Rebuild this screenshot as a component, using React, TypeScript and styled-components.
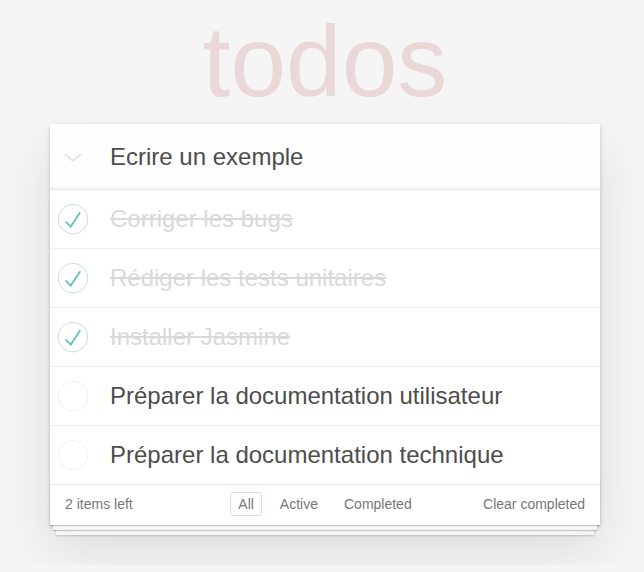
import styled, { createGlobalStyle } from "styled-components";

const GlobalStyle = createGlobalStyle`
  html, body {
    margin: 0;
    padding: 0;
    background: #f5f5f5;
  }
  body {
    font: 14px "Liberation Sans", "Helvetica Neue", Helvetica, Arial, sans-serif;
    line-height: 1.4em;
    color: #4d4d4d;
    -webkit-font-smoothing: antialiased;
  }
`;

const Page = styled.div`
  width: 550px;
  margin: 0 0 0 50px;
  padding-bottom: 40px;
`;

const Title = styled.h1`
  margin: 11px 0 13px;
  height: 100px;
  font-size: 100px;
  line-height: 100px;
  font-weight: 100;
  text-align: center;
  color: rgba(175, 47, 47, 0.15);
  text-rendering: optimizeLegibility;
`;

const Card = styled.section`
  position: relative;
  background: #fff;
  box-shadow: 0 2px 4px rgba(0, 0, 0, 0.2), 0 25px 50px rgba(0, 0, 0, 0.1);
`;

const NewTodoRow = styled.header`
  display: flex;
  align-items: center;
  height: 65px;
  background: rgba(0, 0, 0, 0.003);
  box-shadow: inset 0 -2px 1px rgba(0, 0, 0, 0.03);
`;

const ToggleAll = styled.span`
  display: flex;
  justify-content: center;
  align-items: center;
  width: 46px;
  padding-top: 3px;
  flex-shrink: 0;
`;

const NewTodo = styled.input`
  flex: 1;
  min-width: 0;
  margin: 0 0 0 14px;
  padding: 0 16px 0 0;
  border: none;
  outline: none;
  background: transparent;
  font: inherit;
  font-size: 24px;
  color: #4d4d4d;
`;

const List = styled.ul`
  margin: 0;
  padding: 0;
  list-style: none;
  border-top: 1px solid #e6e6e6;
`;

const Item = styled.li`
  display: flex;
  align-items: center;
  height: 58px;
  border-bottom: 1px solid #ededed;

  &:last-child {
    border-bottom: none;
  }
`;

const Toggle = styled.svg`
  width: 40px;
  height: 40px;
  flex-shrink: 0;
`;

const Label = styled.label<{ $done: boolean }>`
  flex: 1;
  padding-left: 20px;
  font-size: 24px;
  line-height: 1.2;
  color: ${({ $done }) => ($done ? "#d9d9d9" : "#4d4d4d")};
  text-decoration: ${({ $done }) => ($done ? "line-through" : "none")};
  white-space: nowrap;
`;

const Footer = styled.footer`
  position: relative;
  display: grid;
  grid-template-columns: 1fr auto 1fr;
  align-items: center;
  height: 20px;
  padding: 7px 15px 13px;
  border-top: 1px solid #e6e6e6;
  color: #777;

  &::before {
    content: "";
    position: absolute;
    right: 0;
    bottom: 0;
    left: 0;
    height: 50px;
    overflow: hidden;
    pointer-events: none;
    box-shadow: 0 1px 1px rgba(0, 0, 0, 0.2), 0 8px 0 -3px #f6f6f6,
      0 9px 1px -3px rgba(0, 0, 0, 0.2), 0 16px 0 -6px #f6f6f6,
      0 17px 2px -6px rgba(0, 0, 0, 0.2);
  }
`;

const Count = styled.span`
  justify-self: start;
  line-height: 20px;
`;

const Filters = styled.ul`
  display: flex;
  gap: 10px;
  margin: 0;
  padding: 0;
  list-style: none;
`;

const FilterLink = styled.a<{ $selected?: boolean }>`
  display: block;
  padding: 3px 7px;
  line-height: 16px;
  color: inherit;
  text-decoration: none;
  border: 1px solid ${({ $selected }) => ($selected ? "rgba(175, 47, 47, 0.2)" : "transparent")};
  border-radius: 3px;
`;

const ClearCompleted = styled.button`
  justify-self: end;
  margin: 0;
  padding: 0;
  border: none;
  background: none;
  font: inherit;
  color: inherit;
  line-height: 20px;
  cursor: pointer;
`;

function Check({ done }: { done: boolean }) {
  return (
    <Toggle viewBox="-10 -18 100 135">
      <circle cx="50" cy="50" r="50" fill="none" stroke={done ? "#bddad5" : "#ededed"} strokeWidth="3" />
      {done && <path fill="#5dc2af" d="M72 25L42 71 27 56l-4 4 20 20 34-52z" />}
    </Toggle>
  );
}

const todos = [
  { title: "Corriger les bugs", done: true },
  { title: "Rédiger les tests unitaires", done: true },
  { title: "Installer Jasmine", done: true },
  { title: "Préparer la documentation utilisateur", done: false },
  { title: "Préparer la documentation technique", done: false },
];

export default function App() {
  const left = todos.filter((t) => !t.done).length;
  return (
    <>
      <GlobalStyle />
      <Page>
        <Title>todos</Title>
        <Card>
          <NewTodoRow>
            <ToggleAll>
              <svg width="18" height="10" viewBox="0 0 18 10">
                <polyline points="1,1 9,8 17,1" fill="none" stroke="#e6e6e6" strokeWidth="2" />
              </svg>
            </ToggleAll>
            <NewTodo defaultValue="Ecrire un exemple" />
          </NewTodoRow>
          <List>
            {todos.map((t) => (
              <Item key={t.title}>
                <Check done={t.done} />
                <Label $done={t.done}>{t.title}</Label>
              </Item>
            ))}
          </List>
          <Footer>
            <Count>{left} items left</Count>
            <Filters>
              <li>
                <FilterLink href="#/" $selected>All</FilterLink>
              </li>
              <li>
                <FilterLink href="#/active">Active</FilterLink>
              </li>
              <li>
                <FilterLink href="#/completed">Completed</FilterLink>
              </li>
            </Filters>
            <ClearCompleted>Clear completed</ClearCompleted>
          </Footer>
        </Card>
      </Page>
    </>
  );
}
